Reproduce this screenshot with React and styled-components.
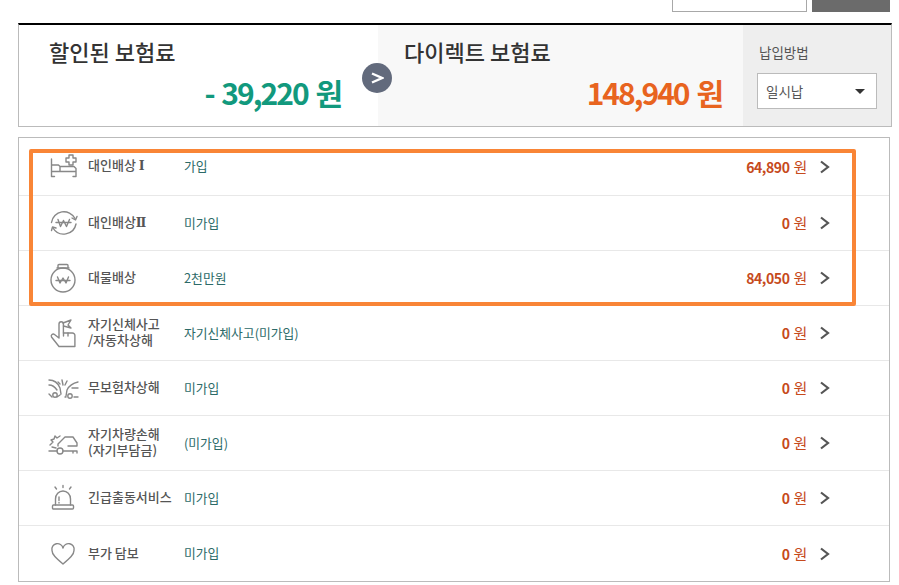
import styled, { createGlobalStyle } from 'styled-components';

const GlobalStyle = createGlobalStyle`
	html, body {
		margin: 0;
		padding: 0;
		background: #fff;
		font-family: 'Noto Sans CJK KR', 'Noto Sans', sans-serif;
	}
	* {
		box-sizing: border-box;
	}
`;

const Page = styled.div`
	width: 899px;
	height: 585px;
	overflow: hidden;
	padding-left: 18px;
`;

const TopBar = styled.div`
	display: flex;
	justify-content: flex-end;
	gap: 5px;
	width: 872px;
	height: 23px;
`;

const TopInput = styled.div`
	width: 135px;
	height: 12px;
	background: #fff;
	border: 1px solid #a8a8a8;
	border-top: none;
`;

const TopButton = styled.div`
	width: 78px;
	height: 12px;
	background: #6b6b6b;
`;

const Summary = styled.section`
	display: flex;
	width: 874px;
	height: 104px;
	border: 1px solid #bbb;
	border-top: 2px solid #000;
`;

const DiscountPane = styled.div`
	position: relative;
	width: 359px;
	padding: 11px 37px 0 30px;
`;

const DirectPane = styled.div`
	width: 365px;
	background: #f8f8f8;
	padding: 11px 21px 0 26px;
`;

const PaneTitle = styled.h2`
	margin: 0;
	font-size: 22px;
	font-weight: 500;
	line-height: 30px;
	color: #333;
`;

const PaneAmount = styled.div`
	margin-top: 5px;
	text-align: right;
	font-size: 30px;
	font-weight: 700;
	line-height: 42px;
	letter-spacing: -2px;
	word-spacing: 3px;
	color: ${(p) => p.$color};
`;

const ArrowBadge = styled.div`
	position: absolute;
	top: 38px;
	right: -14px;
	display: flex;
	align-items: center;
	justify-content: center;
	width: 30px;
	height: 30px;
	border-radius: 50%;
	background: #626a7c;
	z-index: 1;
`;

const PayPane = styled.div`
	flex: 1;
	background: #eee;
	padding: 16px 0 0 14px;
`;

const PayLabel = styled.div`
	margin-left: 2px;
	font-size: 13.5px;
	line-height: 22px;
	color: #555;
`;

const PaySelect = styled.div`
	display: flex;
	align-items: center;
	justify-content: space-between;
	width: 120px;
	height: 36px;
	margin-top: 10px;
	padding: 0 11px 0 8px;
	background: #fff;
	border: 1px solid #bbb;
	font-size: 13.5px;
	color: #555;
`;

const Caret = styled.span`
	width: 0;
	height: 0;
	border-left: 5px solid transparent;
	border-right: 5px solid transparent;
	border-top: 5px solid #333;
`;

const List = styled.section`
	position: relative;
	width: 872px;
	margin-top: 10px;
	border: 1px solid #bbb;
`;

const Row = styled.div`
	display: flex;
	align-items: center;
	height: ${(p) => (p.$first ? '58px' : '55px')};
	padding-left: 29px;
	border-bottom: ${(p) => (p.$last ? 'none' : '1px solid #e8e8e8')};
`;

const IconCell = styled.div`
	display: flex;
	align-items: center;
	justify-content: center;
	width: 32px;
	height: 32px;
	margin-right: 8px;
`;

const RowName = styled.div`
	width: 96px;
	padding-bottom: 2px;
	font-size: 13px;
	font-weight: 500;
	line-height: 16px;
	color: #555;
	white-space: pre-line;
`;

const Numeral = styled.span`
	font-family: 'DejaVu Serif', serif;
	font-size: 12.5px;
	font-weight: 700;
`;

const RowValue = styled.div`
	flex: 1;
	padding-bottom: 2px;
	font-size: 12.8px;
	color: #2c6a68;
`;

const RowAmount = styled.div`
	padding-bottom: 1px;
	font-size: 14px;
	font-weight: 700;
	letter-spacing: -0.4px;
	color: #c64a1c;

	span {
		font-size: 15px;
		font-weight: 400;
		margin-left: 4px;
	}
`;

const Chevron = styled.svg`
	width: 12px;
	height: 14px;
	margin: 0 58px 0 12px;
	fill: none;
	stroke: #555;
	stroke-width: 2.2;
`;

const Highlight = styled.div`
	position: absolute;
	top: 11px;
	left: 10px;
	width: 827px;
	height: 157px;
	border: 4px solid #f98536;
	border-radius: 2px;
	pointer-events: none;
`;

const Icon = styled.svg`
	width: 32px;
	height: 32px;
	fill: none;
	stroke: #888;
	stroke-width: 1.4;
	stroke-linecap: round;
	stroke-linejoin: round;
`;

const BedIcon = () => (
	<Icon viewBox='0 0 32 32'>
		<path d='M3.500 8v17.500h3M3.500 20.500H28v5h-3M28 20.500v-3l-2-2H12v5M3.500 14h7l1.500 1.500' />
		<path d='M21 4h4v3h3v4h-3v3h-4v-3h-3V7h3z' />
	</Icon>
);

const CycleIcon = () => (
	<Icon viewBox='0 0 32 32'>
		<path d='M3.500 15.500A12.500 12.500 0 0 1 27 11.500M28 17A12.500 12.500 0 0 1 5 21' />
		<path d='M24 11l3.500 2 1.500-3.500M8 21l-3.500-1-1 3.500' />
		<path d='M10 12.500l2.500 7 3-6 3 6 3-7M8 15.500h15' />
	</Icon>
);

const PotIcon = () => (
	<Icon viewBox='0 0 32 32'>
		<circle cx='15' cy='18' r='12' />
		<path d='M10 6V3.500a1 1 0 0 1 1-1h8a1 1 0 0 1 1 1V6M9 6h12' />
		<path d='M9.500 15l2.500 6 3-5 3 5 2.500-6M8 18.500h14' />
	</Icon>
);

const HandIcon = () => (
	<Icon viewBox='0 0 32 32'>
		<path d='M11 29.500L3.500 20a2 2 0 0 1 3-2.500L11 21V7a2.200 2.200 0 0 1 4.400 0v9h9a2.500 2.500 0 0 1 2.500 2.500V29.500z' />
		<path d='M15 6l8-3-3 5 3 3-7.500-2M20 16v3M15.500 16v3' />
	</Icon>
);

const CrashIcon = () => (
	<Icon viewBox='0 0 32 32'>
		<path d='M1 8c5 0 9 3 11 8l1 6M1 13c4 0 6 2 8 5M1 22l3 3M9 25l3-2' />
		<circle cx='7' cy='23' r='2.200' />
		<path d='M30 10c-5 1-9 4-11 8l-1 6M30 16h-6M17 25h1M26 25h4' />
		<circle cx='22' cy='24' r='2.200' />
		<path d='M14 8l1 5M19 9l-2 4M10 10l2 2' />
	</Icon>
);

const CarIcon = () => (
	<Icon viewBox='0 0 32 32'>
		<path d='M2 18l3-3-2-2 3-1 1-3 2 2 3-2' />
		<path d='M10 19v-2l7-7h8l4 6v3h-9' />
		<circle cx='12' cy='24' r='3' />
		<path d='M15 24h14M29 24v2M25 24v2M1 24h8M4 20l4 1' />
	</Icon>
);

const SirenIcon = () => (
	<Icon viewBox='0 0 32 32'>
		<path d='M7.500 23v-6a7.500 8 0 0 1 15 0v6' />
		<rect x='4.500' y='23' width='21' height='4' rx='1' />
		<path d='M11 15v3.500M11 20.500v.5M15 3.500v2M7 5l1.500 2M23 5l-1.500 2' />
	</Icon>
);

const HeartIcon = () => (
	<Icon viewBox='0 0 32 32'>
		<path d='M15 26C8 20 4 16.500 4 12.500A5.500 5.500 0 0 1 15 10a5.500 5.500 0 0 1 11 2.500C26 16.500 22 20 15 26z' />
	</Icon>
);

const rows = [
	{ icon: <BedIcon />, name: <>대인배상 <Numeral>Ⅰ</Numeral></>, value: '가입', amount: '64,890' },
	{ icon: <CycleIcon />, name: <>대인배상<Numeral>Ⅱ</Numeral></>, value: '미가입', amount: '0' },
	{ icon: <PotIcon />, name: '대물배상', value: '2천만원', amount: '84,050' },
	{ icon: <HandIcon />, name: '자기신체사고\n/자동차상해', value: '자기신체사고(미가입)', amount: '0' },
	{ icon: <CrashIcon />, name: '무보험차상해', value: '미가입', amount: '0' },
	{ icon: <CarIcon />, name: '자기차량손해\n(자기부담금)', value: '(미가입)', amount: '0' },
	{ icon: <SirenIcon />, name: '긴급출동서비스', value: '미가입', amount: '0' },
	{ icon: <HeartIcon />, name: '부가 담보', value: '미가입', amount: '0' },
];

const App = () => {
	return (
		<Page>
			<GlobalStyle />
			<TopBar>
				<TopInput />
				<TopButton />
			</TopBar>
			<Summary>
				<DiscountPane>
					<PaneTitle>할인된 보험료</PaneTitle>
					<PaneAmount $color='#12997d'>- 39,220 원</PaneAmount>
					<ArrowBadge>
						<svg width='14' height='12' viewBox='0 0 14 12' fill='none' stroke='#fff' strokeWidth='2.4'>
							<path d='M2 1.500l10 4.500-10 4.500' />
						</svg>
					</ArrowBadge>
				</DiscountPane>
				<DirectPane>
					<PaneTitle>다이렉트 보험료</PaneTitle>
					<PaneAmount $color='#e8641f'>148,940 원</PaneAmount>
				</DirectPane>
				<PayPane>
					<PayLabel>납입방법</PayLabel>
					<PaySelect>
						일시납
						<Caret />
					</PaySelect>
				</PayPane>
			</Summary>
			<List>
				{rows.map((row, i) => (
					<Row key={i} $first={i === 0} $last={i === rows.length - 1}>
						<IconCell>{row.icon}</IconCell>
						<RowName>{row.name}</RowName>
						<RowValue>{row.value}</RowValue>
						<RowAmount>
							{row.amount}
							<span>원</span>
						</RowAmount>
						<Chevron viewBox='0 0 12 14'>
							<path d='M2 1.500l7 5.500-7 5.500' />
						</Chevron>
					</Row>
				))}
				<Highlight />
			</List>
		</Page>
	);
};

export default App;
